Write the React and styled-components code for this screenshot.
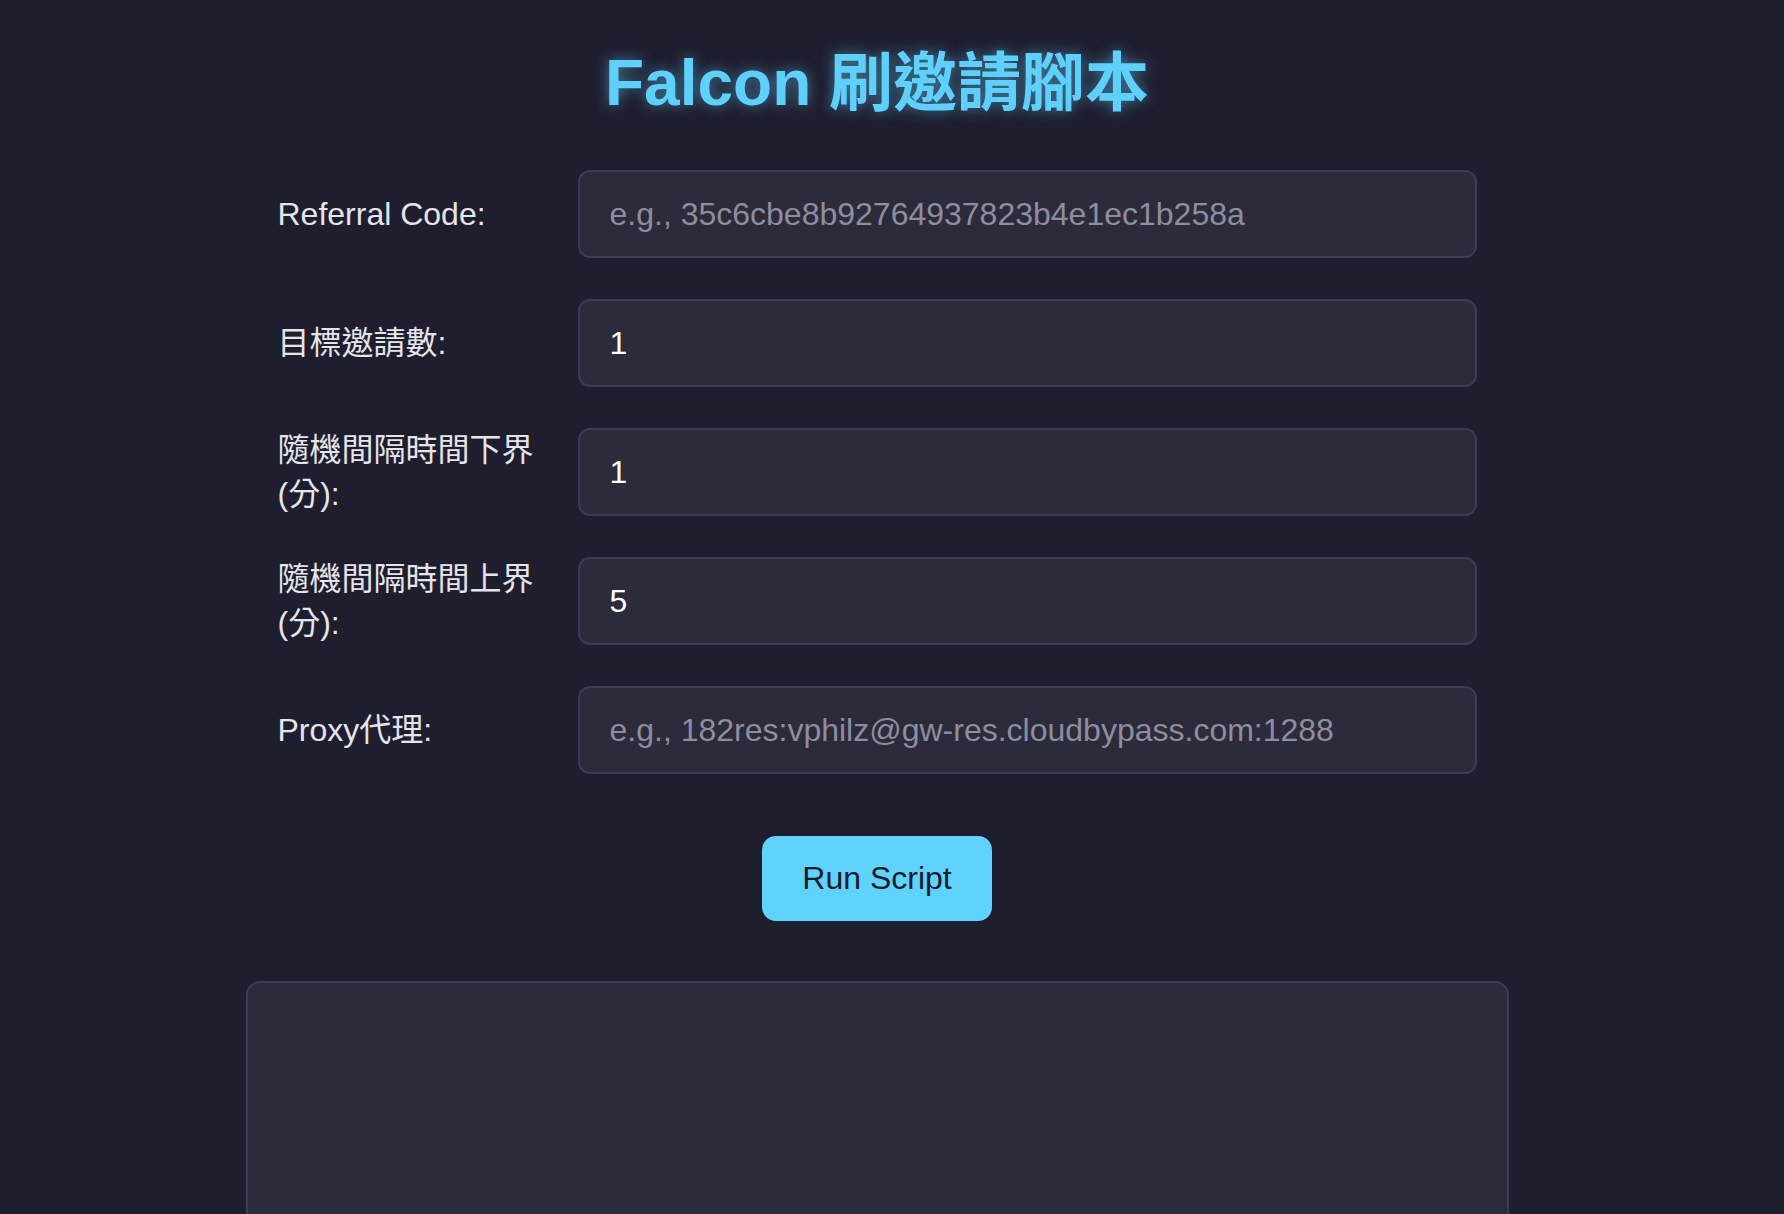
import React from "react";
import styled, { createGlobalStyle } from "styled-components";

const GlobalStyle = createGlobalStyle`
  html, body {
    margin: 0;
    padding: 0;
    background: #1f1e2f;
    overflow: hidden;
  }
  body {
    font-family: "Liberation Sans", Arial, "Noto Sans CJK TC", sans-serif;
  }
`;

const Page = styled.div`
  box-sizing: border-box;
  width: 1784px;
  height: 1214px;
  padding: 46px 30px 0 0;
`;

const Container = styled.div`
  width: 1263px;
  margin: 0 auto;
  display: flex;
  flex-direction: column;
  align-items: stretch;
`;

const Title = styled.h1`
  margin: 0 0 50px;
  text-align: center;
  font-size: 64px;
  line-height: 74px;
  font-weight: 700;
  color: #5fd0fb;
  text-shadow: 0 0 14px rgba(95, 208, 251, 0.55);
`;

const Form = styled.form`
  display: flex;
  flex-direction: column;
  gap: 41px;
  padding: 0 32px;
`;

const Row = styled.div`
  display: flex;
  align-items: center;
  min-height: 88px;
`;

const Label = styled.label`
  flex: 0 0 270px;
  margin-right: 30px;
  font-size: 32px;
  line-height: 44px;
  color: #e4e4ea;
`;

const Input = styled.input`
  flex: 1;
  box-sizing: border-box;
  height: 88px;
  padding: 0 30px;
  background: #2c2b3c;
  border: 2px solid #3b3a57;
  border-radius: 12px;
  color: #ffffff;
  font-family: inherit;
  font-size: 32px;
  outline: none;
  &::placeholder {
    color: #8e8d9d;
  }
`;

const ButtonRow = styled.div`
  display: flex;
  justify-content: center;
  margin: 62px 0 60px;
`;

const RunButton = styled.button`
  width: 230px;
  height: 85px;
  border: none;
  border-radius: 14px;
  background: #5fd3fc;
  color: #1b1b2b;
  font-family: inherit;
  font-size: 32px;
  cursor: pointer;
`;

const Output = styled.div`
  box-sizing: border-box;
  height: 300px;
  background: #2c2b3c;
  border: 2px solid #3b3a57;
  border-radius: 14px;
`;

const fields = [
  { label: "Referral Code:", placeholder: "e.g., 35c6cbe8b92764937823b4e1ec1b258a", value: "" },
  { label: "目標邀請數:", value: "1" },
  { label: "隨機間隔時間下界(分):", value: "1" },
  { label: "隨機間隔時間上界(分):", value: "5" },
  { label: "Proxy代理:", placeholder: "e.g., 182res:vphilz@gw-res.cloudbypass.com:1288", value: "" },
];

export default function App() {
  return (
    <Page>
      <GlobalStyle />
      <Container>
        <Title>Falcon 刷邀請腳本</Title>
        <Form onSubmit={(e) => e.preventDefault()}>
          {fields.map((f, i) => (
            <Row key={i}>
              <Label>{f.label}</Label>
              <Input defaultValue={f.value} placeholder={f.placeholder} />
            </Row>
          ))}
        </Form>
        <ButtonRow>
          <RunButton type="button">Run Script</RunButton>
        </ButtonRow>
        <Output />
      </Container>
    </Page>
  );
}
